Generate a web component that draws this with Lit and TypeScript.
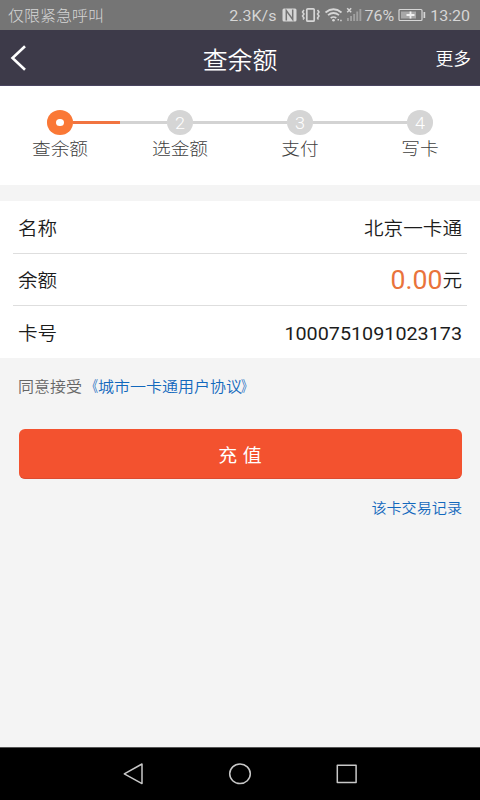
import { LitElement, html, css, svg } from "lit";
import { customElement } from "lit/decorators.js";
import { classMap } from "lit/directives/class-map.js";

const STEPS = ["查余额", "选金额", "支付", "写卡"];

@customElement("app-root")
export class AppRoot extends LitElement {
  static styles = css`
    :host {
      display: flex;
      flex-direction: column;
      width: 480px;
      height: 800px;
      overflow: hidden;
      background: #f4f4f4;
      color: #1c1c1c;
      font-family: Roboto, "Noto Sans CJK SC", sans-serif;
      line-height: 1;
      white-space: nowrap;
    }
    * { box-sizing: border-box; }
    svg { display: block; flex: none; }
    .t { display: inline-block; transform: scaleY(0.9375); }
    .cjk { font-family: "Noto Sans CJK SC DemiLight", "Noto Sans CJK SC", sans-serif; font-weight: 350; }

    .status {
      flex: none;
      display: flex;
      align-items: center;
      height: 30px;
      padding: 2px 10px 0 8px;
      background: #757575;
      color: #d6d6d6;
      font-size: 16px;
    }
    .status .carrier { font-weight: 300; margin-right: auto; }
    .status .icons { margin: -2px 0 0 4px; }
    .status .battery { margin: -2px 4px 0 4px; }

    .header {
      flex: none;
      display: grid;
      grid-template-columns: 1fr auto 1fr;
      align-items: center;
      height: 56px;
      padding: 0 9px;
      background: #3d3a49;
      border-bottom: 1px solid #4a4560;
      color: #fff;
    }
    .title { font-size: 24.9px; padding-top: 3px; }
    .more { justify-self: end; font-size: 17.8px; padding-top: 3px; }

    .steps {
      flex: none;
      display: grid;
      grid-template-columns: repeat(4, 120px);
      height: 99px;
      padding-top: 24px;
      background: #fff;
    }
    .step { display: flex; flex-direction: column; align-items: center; }
    .track { display: flex; align-items: center; width: 100%; }
    .line { flex: 1; height: 3px; background: #d3d3d3; }
    .line.done { background: #f17440; }
    .line.none { background: none; }
    .dot {
      display: flex;
      align-items: center;
      justify-content: center;
      width: 26.6px;
      height: 25px;
      border-radius: 50%;
      background: #d5d5d5;
      color: #fff;
      font-size: 18px;
      font-weight: 300;
    }
    .dot.active { background: #fa7836; }
    .hole { width: 8px; height: 7.5px; border-radius: 50%; background: #fff; margin-bottom: 0.5px; }
    .label { margin-top: 5px; font-size: 18.7px; font-weight: 300; color: #404040; }

    .card { flex: none; margin-top: 16px; background: #fff; padding: 0 13px; height: 157px; }
    .row {
      display: flex;
      align-items: center;
      justify-content: space-between;
      height: 52.5px;
      padding: 2px 5px 0;
      border-bottom: 1px solid #dedede;
      font-size: 19.6px;
    }
    .row:last-child { border-bottom: 0; height: 52px; }
    .amount { display: flex; align-items: center; }
    .num { font-size: 26.6px; color: #e9733b; padding-top: 3px; }
    .id { font-size: 19.75px; padding-top: 1px; }

    .agree { flex: none; display: flex; align-items: center; height: 16px; margin: 19px 18px 0; font-size: 16px; color: #666; }
    .link { color: #1268bd; }
    .mark { display: inline-block; transform: scaleX(0.72); }
    .mark.open { transform-origin: right; }
    .mark.close { transform-origin: left; margin-left: -1px; }
    .pay {
      flex: none;
      display: flex;
      align-items: center;
      justify-content: center;
      height: 50px;
      margin: 36px 18.5px 0;
      padding: 5px 0 0;
      border: 0;
      border-bottom: 1px solid #dc4b30;
      border-radius: 6px;
      background: #f3522f;
      color: #fff;
      font: 18.9px/1 Roboto, "Noto Sans CJK SC", sans-serif;
      word-spacing: 1px;
    }
    .history { flex: none; display: flex; align-items: center; align-self: flex-end; height: 16px; margin: 20px 18px 0; font-size: 15.1px; }

    .nav { flex: none; margin-top: auto; height: 53px; background: #000; border-top: 1px solid #555; }
  `;

  private renderStep(label: string, i: number) {
    const active = i === 0;
    return html`
      <div class="step">
        <div class="track">
          <div class=${classMap({ line: true, none: i === 0 })}></div>
          <div class=${classMap({ dot: true, active })}>
            ${active ? html`<div class="hole"></div>` : html`<span class="t">${i + 1}</span>`}
          </div>
          <div class=${classMap({ line: true, done: active, none: i === STEPS.length - 1 })}></div>
        </div>
        <span class="t label">${label}</span>
      </div>`;
  }

  render() {
    return html`
      <div class="status">
        <span class="t carrier">仅限紧急呼叫</span>
        <span class="t">2.3K/s</span>
        <svg class="icons" width="84" height="18" viewBox="280 6 84 18" fill="none" stroke="#d6d6d6">
          <rect x="282.5" y="8.5" width="14" height="13" rx="1.5" fill="#d6d6d6" stroke="none" />
          <path d="M286.300 20.500V10.500l6.400 9V9.500" stroke="#757575" stroke-width="1.500" />
          <rect x="306.800" y="8.800" width="7.400" height="12.400" rx="1" stroke-width="1.700" />
          <path d="M304 10l-1.500 2 1.500 2-1.500 2 1.500 2-1 1.500M317.500 10l1.500 2-1.500 2 1.500 2-1.500 2 1 1.500" stroke-width="1.500" />
          <path d="M325.500 12.500q8-6.500 16 0M328 15.200q5.500-4.400 11 0M330.700 18q2.800-2 5.600 0" stroke-width="1.700" />
          <circle cx="333.500" cy="20.300" r="1.300" fill="#d6d6d6" stroke="none" />
          <path d="M337.500 19.700h1.500M340.200 20.500h1.500" stroke-width="1.500" />
          <path d="M347.200 8.300l4 4M351.200 8.300l-4 4" stroke-width="1.500" />
          ${[3, 5, 7, 9.5, 12].map((h, i) => svg`<rect x=${347 + i * 3.1} y=${21 - h} width="1.900" height=${h} fill="#a0a0a0" stroke="none" />`)}
        </svg>
        <span class="t">76%</span>
        <svg class="battery" width="28" height="14" viewBox="0 0 28 14">
          <rect x="1" y="1.500" width="23" height="11" rx="1" fill="none" stroke="#d6d6d6" stroke-width="1.200" />
          <rect x="3" y="3.500" width="15" height="7" fill="#a8a8a8" />
          <path d="M12.500 3.500v7M8.500 7h8" stroke="#f0f0f0" stroke-width="1.800" />
          <rect x="25.500" y="4" width="1.700" height="6" fill="#d6d6d6" />
        </svg>
        <span class="t">13:20</span>
      </div>

      <div class="header">
        <svg width="20" height="28" viewBox="0 0 20 28" fill="none" stroke="#fff" stroke-width="2.600">
          <path d="M16 2.200L3.500 14l12.500 11.800" />
        </svg>
        <span class="t cjk title">查余额</span>
        <span class="t cjk more">更多</span>
      </div>

      <div class="steps">${STEPS.map((s, i) => this.renderStep(s, i))}</div>

      <div class="card">
        <div class="row"><span class="t cjk">名称</span><span class="t cjk">北京一卡通</span></div>
        <div class="row">
          <span class="t cjk">余额</span>
          <span class="amount"><span class="t num">0.00</span><span class="t cjk">元</span></span>
        </div>
        <div class="row"><span class="t cjk">卡号</span><span class="t id">1000751091023173</span></div>
      </div>

      <div class="agree"><span class="t cjk">同意接受<span class="link"><span class="mark open">《</span>城市一卡通用户协议<span class="mark close">》</span></span></span></div>
      <button class="pay"><span class="t">充 值</span></button>
      <div class="history"><span class="t cjk link">该卡交易记录</span></div>

      <div class="nav">
        <svg width="480" height="52" viewBox="0 748 480 52" fill="none" stroke="#c8c8c8" stroke-width="1.500" stroke-linejoin="round">
          <path d="M124.300 773.800L142 764v19.600z" />
          <ellipse cx="240" cy="773.800" rx="10.300" ry="9.800" />
          <rect x="337.300" y="765.200" width="18.800" height="17.200" />
        </svg>
      </div>
    `;
  }
}
